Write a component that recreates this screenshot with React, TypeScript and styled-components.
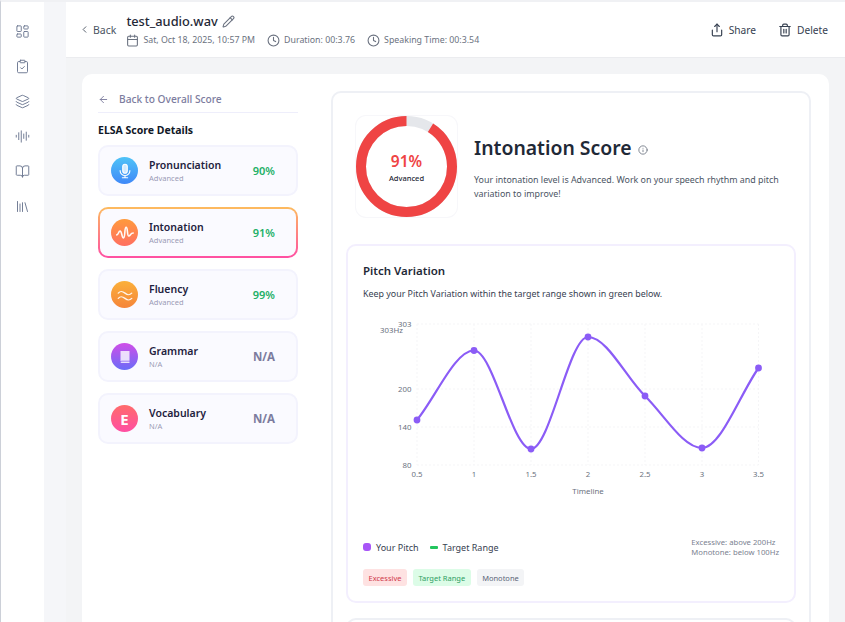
import React from "react";
import styled, { createGlobalStyle } from "styled-components";
import {
  ArrowLeft, AudioLines, BookOpen, Calendar, ChevronLeft, ClipboardCheck, Clock, Info, Layers,
  LayoutDashboard, Library, Pencil, Share, Trash2,
} from "lucide-react";

const Global = createGlobalStyle`
  html, body { margin: 0; padding: 0; background: #fff; }
  * { box-sizing: border-box; }
  body { font-family: "Noto Sans", "Open Sans", sans-serif; color: #1f2937; }
`;

const Page = styled.div`
  width: 845px; height: 622px; overflow: hidden; display: flex;
  border-top: 2px solid #f0f1f4; border-left: 1px solid #ccd0d8;
`;
const Sidebar = styled.nav`
  width: 43px; flex: none; background: #fff; display: flex; flex-direction: column;
  align-items: center; gap: 20px; padding-top: 22px; color: #6b7690;
  svg { width: 15px; height: 15px; stroke-width: 1.5; }
`;
const Gutter = styled.div`width: 22px; flex: none; background: #f5f6f9;`;
const Main = styled.main`flex: 1; min-width: 0; background: #f3f4f6; display: flex; flex-direction: column;`;
const Header = styled.header`
  height: 56px; flex: none; background: #fff; border-bottom: 1px solid #ebecef;
  display: flex; align-items: center; padding: 0 17px 0 13px;
`;
const BackBtn = styled.span`
  display: flex; align-items: center; gap: 3px; font-size: 10.5px; color: #4b5563; margin-right: 10px;
  svg { width: 11px; height: 11px; }
`;
const HeadText = styled.div`flex: 1; display: flex; flex-direction: column; gap: 2.5px;`;
const FileRow = styled.div`
  display: flex; align-items: center; gap: 4px; font-size: 12.8px; font-weight: 500; color: #1f2937; line-height: 19px;
  svg { width: 13px; height: 13px; color: #6b7280; }
`;
const MetaRow = styled.div`display: flex; gap: 12px; font-size: 8.8px; color: #6b7280; line-height: 14px;`;
const Meta = styled.span`
  display: flex; align-items: center; gap: 4px;
  svg { width: 13px; height: 13px; }
`;
const Action = styled.span`
  display: flex; align-items: center; gap: 5px; font-size: 10.2px; color: #374151; margin-left: 22px;
  svg { width: 14px; height: 14px; }
`;
const Content = styled.div`flex: 1; min-height: 0; padding: 16px 16px 0;`;
const Card = styled.div`
  height: 640px; background: #fff; border-radius: 10px; display: flex; gap: 33px; padding: 17px 17px 0 16px;
`;
const Left = styled.div`width: 200px; flex: none;`;
const BackLink = styled.div`
  height: 22px; display: flex; align-items: center; gap: 10px; font-size: 10.2px; color: #7c7c9e;
  border-bottom: 1px solid #eeeefb; font-weight: 500; padding-bottom: 5px;
  svg { width: 11px; height: 11px; }
`;
const ListTitle = styled.h3`margin: 10px 0 8px; font-size: 10.5px; line-height: 14px; font-weight: 700; color: #111827;`;
const List = styled.div`display: flex; flex-direction: column; gap: 11px;`;
const Item = styled.div<{ $active?: boolean }>`
  height: 51px; border-radius: 10px; display: flex; align-items: center; padding: 0 21px 0 11px; gap: 11px;
  border: ${(p) => (p.$active ? "2px solid transparent" : "2px solid #f3f3fd")};
  background: ${(p) =>
    p.$active
      ? "linear-gradient(#fafaff, #fafaff) padding-box, linear-gradient(180deg, #fdbb5e, #ff4fa3) border-box"
      : "#fafaff"};
`;
const IconDisc = styled.span<{ $from: string; $to: string }>`
  width: 27px; height: 27px; border-radius: 50%; flex: none; display: flex; align-items: center; justify-content: center;
  background: linear-gradient(180deg, ${(p) => p.$from}, ${(p) => p.$to});
  color: #fff; font-size: 15px; font-weight: 700;
  svg { width: 18px; height: 18px; }
`;
const ItemText = styled.div`flex: 1; min-width: 0; display: flex; flex-direction: column;`;
const ItemName = styled.span`font-size: 10.5px; line-height: 15px; font-weight: 600; color: #1f2240;`;
const ItemSub = styled.span`font-size: 7.5px; line-height: 10px; color: #9b9bb5;`;
const ItemScore = styled.span<{ $na?: boolean }>`
  font-size: ${(p) => (p.$na ? "11.5px" : "11px")}; font-weight: ${(p) => (p.$na ? 700 : 600)};
  color: ${(p) => (p.$na ? "#7c7c9e" : "#22b066")};
`;
const Right = styled.div`
  width: 480px; flex: none; height: 640px; border: 2px solid #eef0f5; border-radius: 10px; padding: 23px 13px 0;
`;
const ScoreRow = styled.div`display: flex; align-items: center; gap: 17px; padding-left: 10px;`;
const Ring = styled.div`
  position: relative; width: 101px; height: 101px; flex: none; border-radius: 10px; box-shadow: 0 0 0 1px #f7f7fa;
  svg { display: block; }
`;
const RingText = styled.div`
  position: absolute; inset: 0; display: flex; flex-direction: column; align-items: center; justify-content: center; padding-top: 2px;
`;
const RingValue = styled.span`font-size: 15.5px; line-height: 19px; font-weight: 600; color: #ef4444;`;
const RingLabel = styled.span`font-size: 7.5px; line-height: 11px; font-weight: 500; color: #1f2937; margin-top: 2px;`;
const ScoreText = styled.div`flex: 1; padding-top: 2px;`;
const ScoreTitle = styled.h2`
  margin: 0; font-size: 19.4px; line-height: 26px; font-weight: 600; color: #1f2937; display: flex; align-items: center; gap: 6px;
  svg { width: 10px; height: 10px; color: #6b7280; margin-top: 3px; }
`;
const ScoreDesc = styled.p`margin: 12px 0 0; font-size: 8.9px; line-height: 13.5px; color: #4b5563; width: 320px;`;
const PitchCard = styled.section`
  height: 359px; margin-top: 27px; border: 2px solid #f3effe; border-radius: 10px; padding: 17px 15px 0;
`;
const PitchTitle = styled.h3`margin: 0; font-size: 11.5px; line-height: 16px; font-weight: 600; color: #1f2937;`;
const PitchDesc = styled.p`margin: 8px 0 0; font-size: 8.9px; line-height: 13px; color: #374151;`;
const Chart = styled.svg`
  display: block; margin: 16px 0 0 -17px; text { font-family: "Noto Sans", sans-serif; font-size: 7.8px; fill: #6b7280; }
`;
const LegendRow = styled.div`display: flex; justify-content: space-between; align-items: center; margin-top: 41px;`;
const Legend = styled.div`display: flex; gap: 11px; font-size: 9px; color: #374151;`;
const LegendItem = styled.span`display: flex; align-items: center; gap: 5px;`;
const DotKey = styled.i`width: 8px; height: 8px; border-radius: 3px; background: #a855f7;`;
const BarKey = styled.i`width: 8px; height: 3px; border-radius: 1px; background: #22c55e;`;
const Note = styled.div`font-size: 7.7px; line-height: 10px; color: #7b8190;`;
const Chips = styled.div`display: flex; gap: 6px; margin-top: 12px;`;
const Chip = styled.span<{ $bg: string; $fg: string }>`
  height: 17px; padding: 0 5.5px; border-radius: 3px; display: flex; align-items: center; font-size: 7.5px;
  background: ${(p) => p.$bg}; color: ${(p) => p.$fg};
`;
const NextCard = styled.section`
  height: 100px; margin-top: 15px; border: 2px solid #eef0f5; border-radius: 10px;
`;

const OY = 316;
const OX = 346;
const X = [417, 474, 531, 588, 645, 702, 758.5];
const Y = [420, 350.5, 449, 337, 396, 448, 368];
function pitchPath() {
  // monotone cubic interpolation, chart-local coordinates
  const n = X.length;
  const d = X.slice(1).map((x, i) => (Y[i + 1] - Y[i]) / (x - X[i]));
  const m = X.map((_, i) => {
    if (i === 0) return d[0];
    if (i === n - 1) return d[n - 2];
    return d[i - 1] * d[i] <= 0 ? 0 : (2 * d[i - 1] * d[i]) / (d[i - 1] + d[i]);
  });
  let p = `M${X[0]} ${Y[0] - OY}`;
  for (let i = 0; i < n - 1; i++) {
    const h = (X[i + 1] - X[i]) / 3;
    p += `C${X[i] + h} ${Y[i] + m[i] * h - OY} ${X[i + 1] - h} ${Y[i + 1] - m[i + 1] * h - OY} ${X[i + 1]} ${Y[i + 1] - OY}`;
  }
  return p;
}

function PitchChart() {
  const ticks: [string, number][] = [["303", 324], ["200", 389], ["140", 427], ["80", 465]];
  const labels = ["0.5", "1", "1.5", "2", "2.5", "3", "3.5"];
  return (
    <Chart width={450} height={180} viewBox={`${OX} ${0} 450 180`}>
      {ticks.map(([t, y]) => (
        <g key={t}>
          <line x1={417} x2={758.5} y1={y - OY} y2={y - OY} stroke="#f5f5f7" strokeDasharray="2 2" />
          <text x={411.5} y={y - OY + 3} textAnchor="end">{t}</text>
        </g>
      ))}
      {X.map((x) => (
        <line key={x} x1={x} x2={x} y1={8} y2={149} stroke="#f5f5f7" strokeDasharray="2 2" />
      ))}
      <text x={380} y={17}>303Hz</text>
      {labels.map((l, i) => (
        <text key={l} x={X[i]} y={161} textAnchor="middle">{l}</text>
      ))}
      <text x={588} y={178} textAnchor="middle">Timeline</text>
      <path d={pitchPath()} fill="none" stroke="#8b5cf6" strokeWidth={2.2} />
      {X.map((x, i) => <circle key={x} cx={x} cy={Y[i] - OY} r={3.4} fill="#8b5cf6" />)}
    </Chart>
  );
}

const micIcon = (
  <svg viewBox="0 0 24 24" fill="none" stroke="#fff" strokeWidth="1.5" strokeLinecap="round">
    <rect x="9" y="3" width="6" height="12" rx="3" fill="#fff" fillOpacity=".75" />
    <path d="M5.500 11.500a6.500 6.500 0 0 0 13 0M12 18v3M8.500 21h7" />
  </svg>
);
const waveIcon = (
  <svg viewBox="0 0 24 24" fill="none" stroke="#fff" strokeOpacity=".95" strokeWidth="2.1" strokeLinecap="round">
    <path d="M1 14.500c2.500 0 2-5 4.500-5s2 9 4.500 9 1-14 3.500-14 1 11.500 3.500 11.500 2-4 6-4" />
  </svg>
);
const flowIcon = (
  <svg viewBox="0 0 24 24" fill="none" stroke="#fff" strokeOpacity=".9" strokeWidth="1.8" strokeLinecap="round">
    <path d="M3 9.500c3-3 5-3 9 0s6 3 9 0" />
    <path d="M3 16.500c3-3 5-3 9 0s6 3 9 0" />
  </svg>
);
const bookIcon = (
  <svg viewBox="0 0 24 24" fill="#fff" fillOpacity=".8">
    <path d="M6 4h12v13H7.500A2 2 0 0 0 6 17.500V4ZM6 19a1.500 1.500 0 0 1 1.500-1H18v2H7.500A1.500 1.500 0 0 1 6 19Z" />
  </svg>
);

type Row = { name: string; sub: string; score: string; from: string; to: string; icon: React.ReactNode; active?: boolean };
const rows: Row[] = [
  { name: "Pronunciation", sub: "Advanced", score: "90%", from: "#4fc3f7", to: "#3f88f8", icon: micIcon },
  { name: "Intonation", sub: "Advanced", score: "91%", from: "#ff9a3c", to: "#ff6f61", icon: waveIcon, active: true },
  { name: "Fluency", sub: "Advanced", score: "99%", from: "#fbb03b", to: "#f5853a", icon: flowIcon },
  { name: "Grammar", sub: "N/A", score: "N/A", from: "#d04ee8", to: "#6a6cf8", icon: bookIcon },
  { name: "Vocabulary", sub: "N/A", score: "N/A", from: "#ff6b6b", to: "#ff4fa3", icon: "E" },
];

export default function App() {
  const r = 45.5;
  const c = 2 * Math.PI * r;
  return (
    <Page>
      <Global />
      <Sidebar>
        <LayoutDashboard /><ClipboardCheck /><Layers /><AudioLines /><BookOpen /><Library />
      </Sidebar>
      <Gutter />
      <Main>
        <Header>
          <BackBtn><ChevronLeft />Back</BackBtn>
          <HeadText>
            <FileRow>test_audio.wav <Pencil /></FileRow>
            <MetaRow>
              <Meta><Calendar />Sat, Oct 18, 2025, 10:57 PM</Meta>
              <Meta><Clock />Duration: 00:3.76</Meta>
              <Meta><Clock />Speaking Time: 00:3.54</Meta>
            </MetaRow>
          </HeadText>
          <Action><Share />Share</Action>
          <Action><Trash2 />Delete</Action>
        </Header>
        <Content>
          <Card>
            <Left>
              <BackLink><ArrowLeft />Back to Overall Score</BackLink>
              <ListTitle>ELSA Score Details</ListTitle>
              <List>
                {rows.map((row) => (
                  <Item key={row.name} $active={row.active}>
                    <IconDisc $from={row.from} $to={row.to}>{row.icon}</IconDisc>
                    <ItemText>
                      <ItemName>{row.name}</ItemName>
                      <ItemSub>{row.sub}</ItemSub>
                    </ItemText>
                    <ItemScore $na={row.score === "N/A"}>{row.score}</ItemScore>
                  </Item>
                ))}
              </List>
            </Left>
            <Right>
              <ScoreRow>
                <Ring>
                  <svg width="101" height="101" viewBox="0 0 101 101">
                    <circle cx="50.5" cy="50.5" r={r} fill="none" stroke="#e5e7eb" strokeWidth="10" />
                    <circle cx="50.5" cy="50.5" r={r} fill="none" stroke="#ef4444" strokeWidth="10"
                      strokeDasharray={`${c * 0.91} ${c}`} transform="rotate(-90 50.5 50.5) scale(1 -1) translate(0 -101)" />
                  </svg>
                  <RingText>
                    <RingValue>91%</RingValue>
                    <RingLabel>Advanced</RingLabel>
                  </RingText>
                </Ring>
                <ScoreText>
                  <ScoreTitle>Intonation Score <Info /></ScoreTitle>
                  <ScoreDesc>Your intonation level is Advanced. Work on your speech rhythm and pitch variation to improve!</ScoreDesc>
                </ScoreText>
              </ScoreRow>
              <PitchCard>
                <PitchTitle>Pitch Variation</PitchTitle>
                <PitchDesc>Keep your Pitch Variation within the target range shown in green below.</PitchDesc>
                <PitchChart />
                <LegendRow>
                  <Legend>
                    <LegendItem><DotKey />Your Pitch</LegendItem>
                    <LegendItem><BarKey />Target Range</LegendItem>
                  </Legend>
                  <Note>Excessive: above 200Hz<br />Monotone: below 100Hz</Note>
                </LegendRow>
                <Chips>
                  <Chip $bg="#fee2e2" $fg="#d1394a">Excessive</Chip>
                  <Chip $bg="#dcfce7" $fg="#2f9e63">Target Range</Chip>
                  <Chip $bg="#f3f4f6" $fg="#5b6478">Monotone</Chip>
                </Chips>
              </PitchCard>
              <NextCard />
            </Right>
          </Card>
        </Content>
      </Main>
    </Page>
  );
}
